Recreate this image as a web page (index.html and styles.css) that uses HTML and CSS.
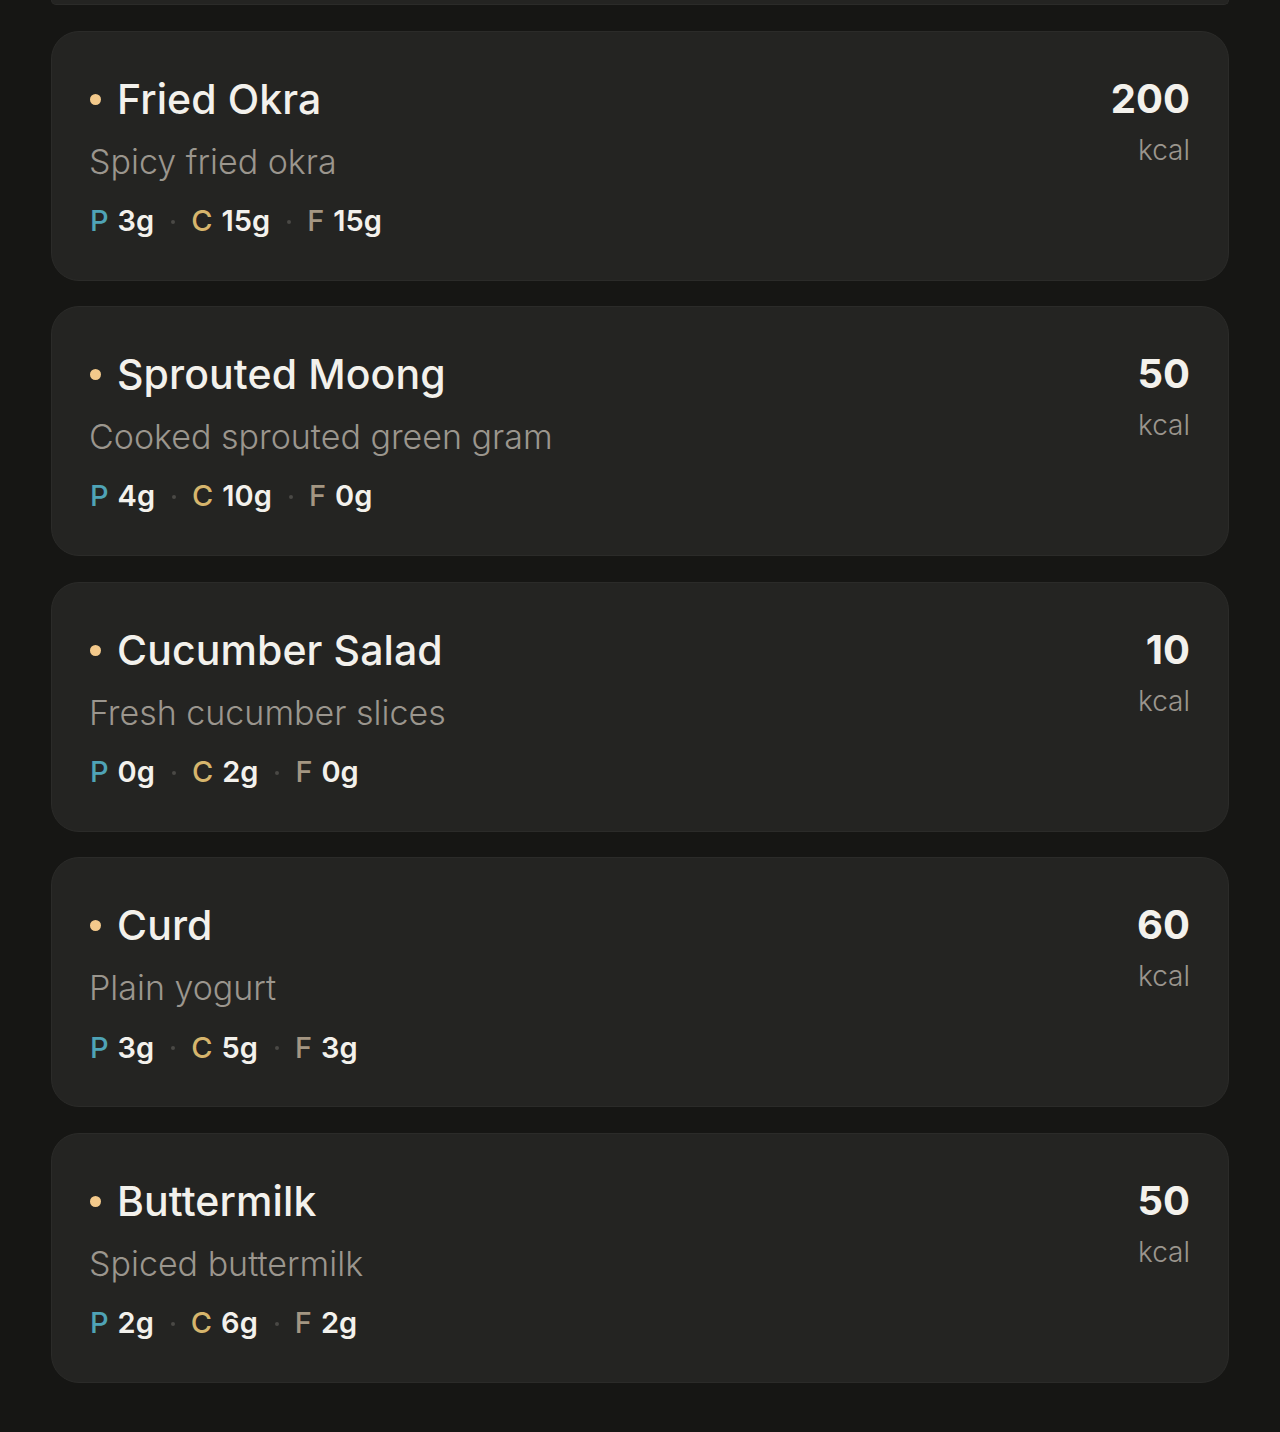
FILE: index.html
```html
<!doctype html>
<html lang="en">
    <head>
        <meta charset="utf-8">
        <title>Meal items</title>
        <!-- Estilos -->
        <link rel="stylesheet" href="styles.css">
    </head>
    <body>
        <div class="Lista">
            <!-- Final de la tarjeta anterior (fuera de la vista) -->
            <div class="Cola"></div>

            <div class="Tarjeta">
                <div class="Info">
                    <div class="Nombre"><span class="Punto"></span>Fried Okra</div>
                    <div class="Desc">Spicy fried okra</div>
                    <div class="Macros">
                        <span class="P">P</span><b>3g</b><i></i>
                        <span class="C">C</span><b>15g</b><i></i>
                        <span class="F">F</span><b>15g</b>
                    </div>
                </div>
                <div class="Kcal"><strong>200</strong><span>kcal</span></div>
            </div>

            <div class="Tarjeta">
                <div class="Info">
                    <div class="Nombre"><span class="Punto"></span>Sprouted Moong</div>
                    <div class="Desc">Cooked sprouted green gram</div>
                    <div class="Macros">
                        <span class="P">P</span><b>4g</b><i></i>
                        <span class="C">C</span><b>10g</b><i></i>
                        <span class="F">F</span><b>0g</b>
                    </div>
                </div>
                <div class="Kcal"><strong>50</strong><span>kcal</span></div>
            </div>

            <div class="Tarjeta">
                <div class="Info">
                    <div class="Nombre"><span class="Punto"></span>Cucumber Salad</div>
                    <div class="Desc">Fresh cucumber slices</div>
                    <div class="Macros">
                        <span class="P">P</span><b>0g</b><i></i>
                        <span class="C">C</span><b>2g</b><i></i>
                        <span class="F">F</span><b>0g</b>
                    </div>
                </div>
                <div class="Kcal"><strong>10</strong><span>kcal</span></div>
            </div>

            <div class="Tarjeta">
                <div class="Info">
                    <div class="Nombre"><span class="Punto"></span>Curd</div>
                    <div class="Desc">Plain yogurt</div>
                    <div class="Macros">
                        <span class="P">P</span><b>3g</b><i></i>
                        <span class="C">C</span><b>5g</b><i></i>
                        <span class="F">F</span><b>3g</b>
                    </div>
                </div>
                <div class="Kcal"><strong>60</strong><span>kcal</span></div>
            </div>

            <div class="Tarjeta">
                <div class="Info">
                    <div class="Nombre"><span class="Punto"></span>Buttermilk</div>
                    <div class="Desc">Spiced buttermilk</div>
                    <div class="Macros">
                        <span class="P">P</span><b>2g</b><i></i>
                        <span class="C">C</span><b>6g</b><i></i>
                        <span class="F">F</span><b>2g</b>
                    </div>
                </div>
                <div class="Kcal"><strong>50</strong><span>kcal</span></div>
            </div>
        </div>
    </body>
</html>
```

FILE: styles.css
```css
body {
    margin:0;
    background:#161614;
    font-family:Inter, "Noto Sans", sans-serif;
    color:#f3f1ec;
}

/* Columna de tarjetas */
.Lista {
    display:flex;
    flex-direction:column;
    gap:25.5px;
    padding:0 51px 50px;
}

/* Borde inferior de la tarjeta que queda arriba */
.Cola {
    height:4px;
    background:#242422;
    border:1px solid #2b2b29;
    border-top:0;
    border-radius:0 0 28px 28px;
}

.Tarjeta {
    display:flex;
    justify-content:space-between;
    align-items:flex-start;
    background:#242422;
    border:1px solid #2b2b29;
    border-radius:28px;
    padding:43px 38px 40px 38px;
}

.Nombre {
    display:flex;
    align-items:center;
    font-size:41px;
    line-height:1.2;
    font-weight:500;
    letter-spacing:0.1px;
}
.Punto {
    width:11px;
    height:11px;
    border-radius:50%;
    background:#f3c98b;
    margin:0 16px 0 0;
}

.Desc {
    margin-top:16px;
    font-size:34px;
    line-height:1.3;
    font-weight:300;
    color:#9b968e;
    margin-left:-1px;
}

.Macros {
    display:flex;
    align-items:center;
    margin-top:18px;
    font-size:29px;
    line-height:1.3;
}
.Macros span { font-weight:500; margin-right:9px; }
.Macros b    { font-weight:600; }
.Macros i {
    width:4px;
    height:4px;
    border-radius:50%;
    background:#4a4945;
    margin:2px 16px 0 17px;
}
.P { color:#4fa3b6; }
.C { color:#d6b56c; }
.F { color:#a49682; }

/* Calorias a la derecha */
.Kcal {
    display:flex;
    flex-direction:column;
    align-items:flex-end;
}
.Kcal strong {
    font-size:40px;
    line-height:1.2;
    font-weight:700;
}
.Kcal span {
    margin-top:9px;
    font-size:28px;
    line-height:1.3;
    font-weight:300;
    color:#9b968e;
}
```
